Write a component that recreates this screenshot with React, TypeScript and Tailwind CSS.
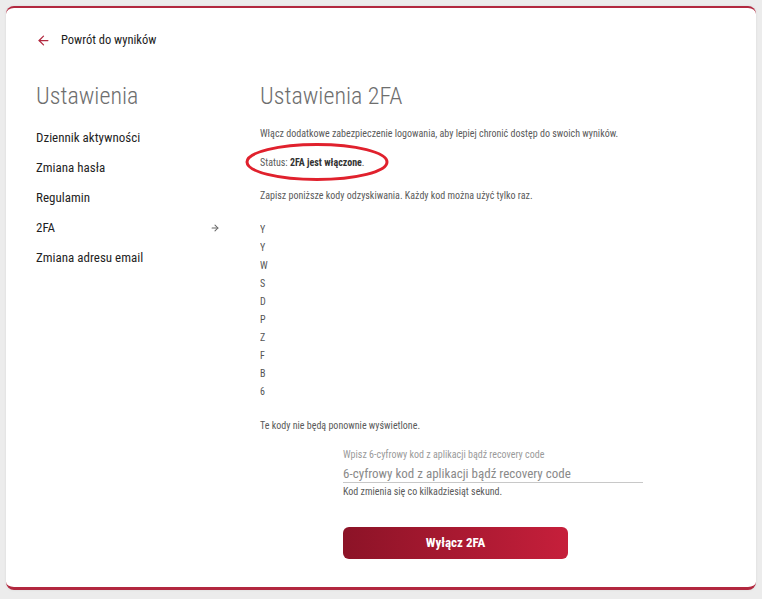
import { ArrowLeft, ArrowRight } from "lucide-react";

const navItems = [
  "Dziennik aktywności",
  "Zmiana hasła",
  "Regulamin",
  "2FA",
  "Zmiana adresu email",
];

const recoveryCodes = ["Y", "Y", "W", "S", "D", "P", "Z", "F", "B", "6"];

const font = "[font-family:'Liberation_Sans_Narrow','Roboto_Condensed',Roboto,sans-serif]";

export default function App() {
  return (
    <div className={`min-h-screen bg-[#ececec] p-[6px] ${font}`}>
      <div className="min-h-[584px] rounded-lg border-t-2 border-b-[3px] border-[#b2283f] bg-white shadow-[0_0_3px_rgba(0,0,0,0.08)]">
        <div className="px-[30px] pt-[23px]">
          <a className="flex items-center gap-[10px] text-[12.5px] text-[#1c1c1c]">
            <ArrowLeft className="h-[15px] w-[15px] text-[#b2283f]" strokeWidth={2} />
            Powrót do wyników
          </a>
        </div>

        <div className="mt-[31px] flex px-[30px]">
          {/* side menu */}
          <div className="w-[224px] shrink-0">
            <h2 className="text-[24px] font-light leading-[30px] text-[#6e6e6e]">Ustawienia</h2>
            <nav className="mt-[12px] flex flex-col">
              {navItems.map((item) => (
                <div key={item} className="flex h-[30px] items-center justify-between pr-[40px] text-[13px] text-[#1f1f1f]">
                  <span>{item}</span>
                  {item === "2FA" && <ArrowRight className="h-[10px] w-[10px] text-[#666]" strokeWidth={2.5} />}
                </div>
              ))}
            </nav>
          </div>

          {/* 2FA settings */}
          <div className="flex-1">
            <h1 className="text-[24px] font-light leading-[30px] text-[#6e6e6e]">Ustawienia 2FA</h1>

            <p className="mt-[15px] text-[10px] text-[#5a5a5a]">
              Włącz dodatkowe zabezpieczenie logowania, aby lepiej chronić dostęp do swoich wyników.
            </p>

            <div className="relative mt-[14px]">
              <p className="text-[10px] text-[#5a5a5a]">
                Status: <span className="font-bold text-[#333]">2FA jest włączone</span>.
              </p>
              <svg className="absolute left-[-15px] top-[-13px] h-[40px] w-[144px]" viewBox="0 0 144 40" fill="none">
                <ellipse cx="72" cy="20" rx="70" ry="17.5" stroke="#e0212d" strokeWidth="3" />
              </svg>
            </div>

            <p className="mt-[18px] text-[10px] text-[#5a5a5a]">
              Zapisz poniższe kody odzyskiwania. Każdy kod można użyć tylko raz.
            </p>

            <ul className="mt-[18px] flex w-[10px] flex-col overflow-hidden">
              {recoveryCodes.map((code, i) => (
                <li key={i} className="h-[18px] text-[10px] leading-[18px] text-[#555]">
                  {code}
                </li>
              ))}
            </ul>

            <p className="mt-[17px] text-[10px] text-[#5a5a5a]">Te kody nie będą ponownie wyświetlone.</p>

            <div className="mt-[15px] ml-[83px] w-[300px]">
              <label className="block text-[10px] leading-[13px] text-[#9a9a9a]">Wpisz 6-cyfrowy kod z aplikacji bądź recovery code</label>
              <input
                className="w-full border-b border-[#c8c8c8] text-[13px] leading-[17px] text-[#333] outline-none placeholder:text-[#8a8a8a]"
                placeholder="6-cyfrowy kod z aplikacji bądź recovery code"
              />
              <p className="mt-0 text-[10px] leading-[14px] text-[#5a5a5a]">Kod zmienia się co kilkadziesiąt sekund.</p>
            </div>

            <button className="mt-[28px] ml-[83px] h-[32px] w-[225px] rounded-md bg-gradient-to-r from-[#8c1327] to-[#c61f3b] text-[13px] font-bold text-white">
              Wyłącz 2FA
            </button>
          </div>
        </div>
      </div>
    </div>
  );
}
